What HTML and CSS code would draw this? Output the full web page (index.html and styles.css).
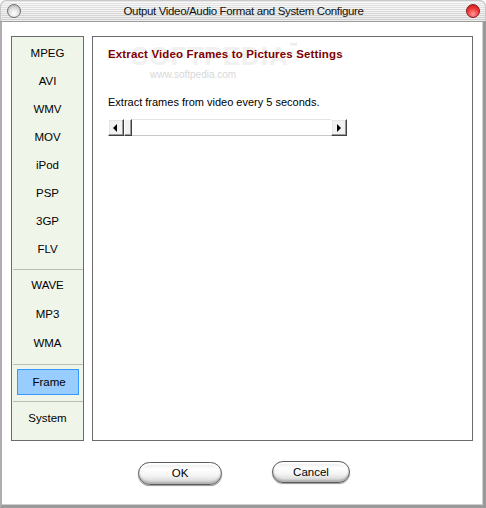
FILE: index.html
```html
<!DOCTYPE html>
<html>
<head>
<meta charset="utf-8">
<link rel="stylesheet" href="styles.css">
</head>
<body>
<div class="window">
  <div class="titlebar">
    <span class="orb orb-gray"></span>
    <span class="title">Output Video/Audio Format and System Configure</span>
    <span class="orb orb-red"></span>
  </div>
  <div class="main">
    <div class="sidebar">
      <div class="group group-video">
        <div class="item">MPEG</div>
        <div class="item">AVI</div>
        <div class="item">WMV</div>
        <div class="item">MOV</div>
        <div class="item">iPod</div>
        <div class="item">PSP</div>
        <div class="item">3GP</div>
        <div class="item">FLV</div>
      </div>
      <div class="sep"></div>
      <div class="group group-audio">
        <div class="item item-audio">WAVE</div>
        <div class="item item-audio">MP3</div>
        <div class="item item-audio">WMA</div>
      </div>
      <div class="sep"></div>
      <div class="group group-frame">
        <div class="item-active">Frame</div>
      </div>
      <div class="sep"></div>
      <div class="item item-system">System</div>
    </div>
    <div class="content">
      <div class="watermark">SOFTPEDIA<span class="tm">™</span></div>
      <div class="watermark-url">www.softpedia.com</div>
      <div class="heading">Extract Video Frames to Pictures Settings</div>
      <div class="desc">Extract frames from video every 5 seconds.</div>
      <div class="scroll">
        <div class="sbtn"><svg width="8" height="8" viewBox="0 0 8 8"><path d="M5 0 L1 4 L5 8 Z" fill="#000"/></svg></div>
        <div class="thumb"></div>
        <div class="track"></div>
        <div class="sbtn"><svg width="8" height="8" viewBox="0 0 8 8"><path d="M2 0 L6 4 L2 8 Z" fill="#000"/></svg></div>
      </div>
    </div>
  </div>
  <div class="footer">
    <div class="pill pill-ok">OK</div>
    <div class="pill pill-cancel">Cancel</div>
  </div>
</div>
</body>
</html>
```
FILE: styles.css
```css
html, body {
  margin: 0;
  padding: 0;
  background: #ffffff;
}
body {
  width: 486px;
  height: 508px;
  overflow: hidden;
  font-family: "Liberation Sans", Arial, sans-serif;
  font-size: 11px;
  color: #000;
}
.window {
  box-sizing: border-box;
  width: 486px;
  height: 508px;
  background: #fff;
  border-left: 2px solid #b3abb3;
  border-right: 3px solid #9a9a9a;
  border-bottom: 3px solid #9a9a9a;
  border-radius: 7px 7px 0 0;
  display: flex;
  flex-direction: column;
  box-shadow: inset -1px -1px 0 #d0d0d0;
}
.titlebar {
  height: 21px;
  margin-left: -2px;
  margin-right: -3px;
  border-radius: 7px 7px 0 0;
  border-bottom: 1px solid #9c9c9c;
  background:
    repeating-linear-gradient(to bottom, rgba(255,255,255,0.6) 0px, rgba(255,255,255,0.6) 1px, rgba(0,0,0,0.04) 1px, rgba(0,0,0,0.04) 2px),
    linear-gradient(to bottom, #f2f2f2 0%, #e4e4e4 50%, #d4d4d4 100%);
  display: flex;
  align-items: center;
  padding: 0 6px 0 7px;
  box-shadow: inset 0 1px 0 #c8c8c8, inset 1px 0 0 #c8c8c8, inset -1px 0 0 #c8c8c8;
}
.title {
  flex: 1;
  text-align: center;
  font-size: 11.5px;
  color: #111;
  letter-spacing: -0.35px;
  padding-top: 1px;
}
.orb {
  width: 14px;
  height: 14px;
  border-radius: 50%;
  box-sizing: border-box;
  flex: none;
}
.orb-gray {
  border: 1px solid #6e6e6e;
  background: radial-gradient(circle at 50% 70%, #ffffff 0%, #e2e2e2 45%, #a8a8a8 100%);
}
.orb-red {
  border: 1px solid #8a1a1a;
  background: radial-gradient(circle at 50% 75%, #ff9a9a 0%, #f23a3a 50%, #b81414 100%);
}
.main {
  display: flex;
  padding: 14px 0 0 9px;
}
.sidebar {
  box-sizing: border-box;
  width: 73px;
  height: 405px;
  background: #f0f5ea;
  border: 1px solid #6b6b6b;
  display: flex;
  flex-direction: column;
}
.group-video {
  padding: 2px 0 6px;
}
.item {
  height: 28px;
  line-height: 28px;
  text-align: center;
  font-size: 11.5px;
}
.item-audio {
  height: 29px;
  line-height: 29px;
}
.group-audio {
  padding: 1px 0 6px;
}
.sep {
  height: 1px;
  background: #b9bcb5;
  margin: 0 0 0 1px;
}
.group-frame {
  padding: 4px 4px 6px 5px;
}
.item-active {
  box-sizing: border-box;
  height: 26px;
  line-height: 24px;
  background: #99ccff;
  border: 1px solid #3399ff;
  text-align: center;
  padding-left: 2px;
  font-size: 11.5px;
}
.item-system {
  height: 32px;
  line-height: 32px;
}
.content {
  position: relative;
  box-sizing: border-box;
  width: 381px;
  height: 405px;
  margin-left: 8px;
  border: 1px solid #6b6b6b;
  background: #fff;
  padding: 10px 0 0 15px;
}
.watermark {
  position: absolute;
  left: 38px;
  top: 4px;
  font-size: 26px;
  font-weight: bold;
  color: #f1f1f1;
  letter-spacing: 1px;
}
.tm {
  font-size: 9px;
  vertical-align: top;
  color: #e4e4e4;
}
.watermark-url {
  position: absolute;
  left: 57px;
  top: 32px;
  font-size: 10px;
  color: #d8d8d8;
}
.heading {
  position: relative;
  font-weight: bold;
  font-size: 11.5px;
  letter-spacing: 0.15px;
  color: #7f0000;
  height: 14px;
  line-height: 14px;
}
.desc {
  margin-top: 34px;
  height: 14px;
  line-height: 14px;
}
.scroll {
  margin-top: 10px;
  width: 239px;
  height: 17px;
  display: flex;
}
.sbtn {
  box-sizing: border-box;
  width: 16px;
  height: 17px;
  background: #f2f2f2;
  border-top: 1px solid #fff;
  border-left: 1px solid #fff;
  border-right: 1px solid #404040;
  border-bottom: 1px solid #404040;
  box-shadow: inset -1px -1px 0 #9a9a9a, inset 1px 1px 0 #e6e6e6;
  display: flex;
  align-items: center;
  justify-content: center;
}
.thumb {
  box-sizing: border-box;
  width: 8px;
  height: 17px;
  background: #f2f2f2;
  border-top: 1px solid #fff;
  border-left: 1px solid #fff;
  border-right: 1px solid #404040;
  border-bottom: 1px solid #404040;
  box-shadow: inset -1px -1px 0 #9a9a9a;
}
.track {
  flex: 1;
  box-sizing: border-box;
  height: 17px;
  background: #fff;
  border-top: 1px solid #e4e4e4;
  border-bottom: 1px solid #c8c8c8;
}
.footer {
  display: flex;
  justify-content: center;
  align-items: flex-start;
  gap: 50px;
  padding: 21px 0 0 3px;
}
.pill {
  box-sizing: border-box;
  height: 23px;
  border-radius: 12px;
  border: 1px solid #5a5a5a;
  background: linear-gradient(to bottom, #e6e6e6 0%, #ffffff 30%, #f4f4f4 60%, #cfcfcf 100%);
  box-shadow: inset 0 -2px 2px #b0b0b0, inset 0 2px 1px #ffffff, 0 1px 1px #9a9a9a;
  text-align: center;
  line-height: 21px;
  font-size: 11.5px;
}
.pill-ok {
  width: 84px;
}
.pill-cancel {
  width: 78px;
  height: 22px;
  line-height: 20px;
  margin-top: -1px;
}
```
